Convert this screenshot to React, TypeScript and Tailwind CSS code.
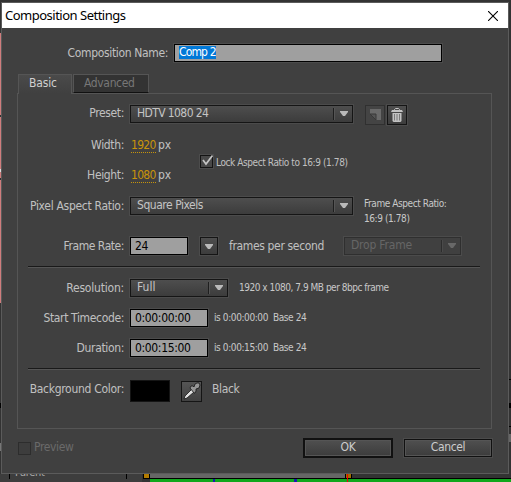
import React from "react";

function Arrow({ dim = false }: { dim?: boolean }) {
  return (
    <svg width="8" height="6" viewBox="0 0 8 6" className="shrink-0">
      <path d="M0 0H8V1L5 5H3L0 1Z" fill={dim ? "#686868" : "#bababa"} />
    </svg>
  );
}

function Label({ children, className = "" }: { children: string; className?: string }) {
  return <div className={`mr-[6px] flex w-[106px] shrink-0 justify-end whitespace-pre text-[#c0c0c0] ${className}`}>{children}</div>;
}

function Select({ children, className, text = "", dim = false }: { children: string; className: string; text?: string; dim?: boolean }) {
  return (
    <div className={`flex h-[18px] shrink-0 items-center border pl-[6px] pr-1 shadow-[0_0_0_1px_#4b4b4b] ${dim ? "border-[#2f2f2f] bg-[#404040] text-[#666]" : "border-[#151515] bg-linear-to-b from-[#4e4e4e] to-[#3c3c3c] text-[#c4c4c4]"} ${className}`}>
      <span className={`relative -top-px flex-1 whitespace-nowrap ${text}`}>{children}</span>
      <span className={`mr-[5px] h-[12px] w-[2px] border-l ${dim ? "border-[#2d2d2d] bg-[#4a4a4a]" : "border-[#1e1e1e] bg-[#555]"}`} />
      <Arrow dim={dim} />
    </div>
  );
}

function Field({ children, className }: { children: React.ReactNode; className: string }) {
  return <div className={`flex h-[18px] shrink-0 items-center whitespace-nowrap border border-black bg-[#9f9f9f] pl-1 text-black shadow-[0_0_0_1px_#4c4c4c] ${className}`}>{children}</div>;
}

function Rule() {
  return <div className="ml-[10px] h-[2px] w-[452px] border-t border-[#191919] bg-[#555]" />;
}

function Check({ checked = false }: { checked?: boolean }) {
  return (
    <div className={`h-[13px] w-[13px] shrink-0 border ${checked ? "border-[#141414] bg-[#484848] shadow-[0_0_0_1px_#4c4c4c]" : "border-[#2d2d2d] bg-[#3d3d3d]"}`}>
      {checked && (
        <svg width="13" height="13" viewBox="0 0 13 13" className="-mt-[2px] overflow-visible">
          <path d="M2 6L5 10 11.5 1.5" fill="none" stroke="#c4c4c4" strokeWidth="1.7" />
        </svg>
      )}
    </div>
  );
}

export default function App() {
  return (
    <div className="relative h-[482px] w-[511px] overflow-hidden bg-[#333] font-['DejaVu_Sans_Condensed','DejaVu_Sans',sans-serif] text-[12px] leading-[14px] tracking-[-0.35px] [font-stretch:condensed]">
      <Backdrop />
      <main className="absolute left-px top-[2px] flex h-[472px] w-[508px] flex-col border border-[#5b5b5b] bg-[#404040]">
        <header className="flex h-[25px] shrink-0 items-center justify-between bg-white pl-[3px] pr-[10px] text-black">
          <h1 className="relative -top-px font-['Noto_Sans',sans-serif] text-[13px] tracking-[-0.5px]">Composition Settings</h1>
          <svg width="10" height="10" viewBox="0 0 10 10"><path d="M0 0L10 10M10 0L0 10" stroke="#000" strokeWidth="1.1" /></svg>
        </header>
        <div className="mt-4 flex h-[18px] shrink-0 items-center">
          <div className="mr-[6px] flex w-[166px] justify-end text-[#c0c0c0]">Composition Name:</div>
          <Field className="w-[268px]"><span className="-mt-[1px] h-[13px] w-[37px] bg-[#0078d7] leading-[13px] tracking-[-0.85px] text-white">Comp 2</span></Field>
        </div>
        <nav className="mt-3 ml-4 flex h-[19px] shrink-0 items-start">
          <div className="z-10 h-5 w-[54px] border border-b-0 border-[#555] bg-linear-to-b from-[#4a4a4a] to-[#404040] pl-[10px] pt-px tracking-[-0.15px] text-[#d0d0d0]">Basic</div>
          <div className="ml-px h-[19px] w-[76px] border border-b-[#111] border-[#555] bg-[#333] pl-[10px] pt-px text-[#777]">Advanced</div>
        </nav>
        <section className="ml-[15px] h-[336px] w-[475px] shrink-0 border border-[#555] pt-[11px]">
          <div className="flex h-5 items-start">
            <Label className="pt-[1px]">Preset:</Label>
            <Select className="w-[223px]" text="tracking-[-0.6px]">HDTV 1080 24</Select>
            <div className="ml-3 flex h-5 w-5 items-center justify-center border border-[#303030] bg-[#444]">
              <svg width="11" height="11" className="-mt-px"><path d="M0 0H11V11H6V5H0Z" fill="#6a6a6a" /><path d="M0 5H6V11L0 5Z" fill="#555" stroke="#383838" /></svg>
            </div>
            <div className="ml-[2px] flex h-5 w-5 items-center justify-center border border-[#151515] bg-linear-to-b from-[#4e4e4e] to-[#3d3d3d] shadow-[0_0_0_1px_#4b4b4b]">
              <svg width="12" height="14" viewBox="0 0 12 14" className="-mt-px"><path d="M3.5 2V1.5L4.5 .5H7.5L8.5 1.5V2" fill="none" stroke="#c6c6c6" /><path d="M1 2H11L12 4H0ZM1.5 5H10.5V13L9.5 14H2.5L1.5 13Z" fill="#c2c2c2" /><path d="M3.5 6V12.5M6 6V12.5M8.5 6V12.5" stroke="#666" strokeWidth=".8" /></svg>
            </div>
          </div>
          <div className="mt-[13px] flex h-[45px] text-[#c0c0c0]">
            <div className="flex w-[182px] flex-col justify-between">
              {[["Width:", "1920"], ["Height:", "1080"]].map(([a, b]) => (
                <div key={a} className="flex h-[15px]"><Label>{a}</Label><span className="ml-px h-[15px] w-[25px] border-b border-dotted border-[#c8940b] tracking-[-0.7px] text-[#c8940b]">{b}</span><span className="ml-[2px] tracking-[-0.1px]">px</span></div>
              ))}
            </div>
            <div className="flex h-[47px] items-center gap-[3px] text-[10px]"><Check checked /><span className="relative top-px tracking-[-0.41px]">Lock Aspect Ratio to 16:9 (1.78)</span></div>
          </div>
          <div className="mt-[14px] flex h-[30px] items-start">
            <Label className="pt-[2px] tracking-[-0.3px]">Pixel Aspect Ratio:</Label>
            <Select className="w-[223px]" text="tracking-[-0.46px]">Square Pixels</Select>
            <div className="-mt-px ml-[11px] text-[10px] leading-[15px] tracking-[-0.42px] text-[#c8c8c8]">Frame Aspect Ratio:<br />16:9 (1.78)</div>
          </div>
          <div className="mt-[10px] flex h-[18px] items-center">
            <Label className="tracking-[-0.45px]">Frame Rate:</Label>
            <Field className="w-[58px] leading-[16px]"><span className="-mt-px">24</span></Field>
            <div className="ml-3 flex h-[18px] w-[18px] items-center justify-center border border-[#151515] bg-linear-to-b from-[#4e4e4e] to-[#3c3c3c] pt-px shadow-[0_0_0_1px_#4b4b4b]"><Arrow /></div>
            <span className="ml-[11px] w-[115px] text-[#c0c0c0]">frames per second</span>
            <Select dim className="w-[117px]" text="tracking-[-0.2px]">Drop Frame</Select>
          </div>
          <div className="mt-[11px]"><Rule /></div>
          <div className="mt-[11px] flex h-[18px] items-center">
            <Label className="tracking-[-0.2px]">Resolution:</Label><Select className="w-[98px]" text="tracking-normal">Full</Select>
            <span className="ml-[11px] text-[10px] tracking-[-0.48px] text-[#c8c8c8]">1920 x 1080, 7.9 MB per 8bpc frame</span>
          </div>
          {[["Start Timecode:", "0:00:00:00"], ["Duration:", "0:00:15:00"]].map(([a, b]) => (
            <div key={a} className="mt-3 flex h-[18px] items-center">
              <Label>{a}</Label><Field className="w-[78px]"><span className="-mt-px">{b}</span></Field>
              <span className="ml-[6px] whitespace-pre text-[10px] tracking-[-0.4px] text-[#c8c8c8]">is {b}  Base 24</span>
            </div>
          ))}
          <div className="mt-[11px]"><Rule /></div>
          <div className="mt-[10px] flex h-[22px] items-center">
            <Label className="-mt-[5px] tracking-[-0.3px]">Background Color:</Label>
            <div className="h-[22px] w-10 border border-[#151515] bg-black" />
            <div className="ml-[11px] h-[21px] w-[21px] border border-[#151515] bg-linear-to-b from-[#555] to-[#414141]">
              <svg width="19" height="19" viewBox="0 0 19 19"><path d="M2 17L3 14 9.5 7.5 12 10 5 16Z" fill="#e0e0e0" stroke="#171717" strokeWidth=".8" /><path d="M8 6L9 4L11 4L12 5L13 2L15 1H17L18 3L17 6L14 7V9L13 11H12Z" fill="#969696" stroke="#171717" strokeWidth=".8" /></svg>
            </div>
            <span className="-mt-[5px] ml-[10px] text-[#c0c0c0]">Black</span>
          </div>
        </section>
        <footer className="mt-[9px] flex h-5 items-center pl-4 text-[#6a6a6a]">
          <Check /><span className="relative -top-px ml-[3px] w-[269px]">Preview</span>
          <button className="h-5 w-[90px] border-2 border-[#111] bg-linear-to-b from-[#505050] to-[#3c3c3c] leading-[14px] text-[#ccc] shadow-[inset_0_0_0_1px_#555]"><span className="relative -top-px">OK</span></button>
          <button className="ml-[11px] h-[18px] w-[88px] border border-[#111] bg-linear-to-b from-[#505050] to-[#3c3c3c] leading-[14px] text-[#ccc] shadow-[0_0_0_1px_#4b4b4b,inset_0_0_0_1px_#555]"><span className="relative -top-px">Cancel</span></button>
        </footer>
      </main>
    </div>
  );
}

function Backdrop() {
  return (
    <div className="absolute inset-0">
      <div className="absolute left-0 top-[33px] h-[270px] w-px bg-[#d07d7d]" />
      <div className="absolute left-0 top-[115px] h-[2px] w-px bg-[#333]" />
      <div className="absolute left-0 top-[169px] h-[3px] w-px bg-[#ddd]" />
      <div className="absolute left-0 top-[178px] h-[2px] w-px bg-[#333]" />
      <div className="absolute left-0 top-[403px] h-[5px] w-px bg-black" />
      <div className="absolute left-0 top-[443px] h-[8px] w-px bg-[#777]" />
      <div className="absolute right-0 top-[379px] h-px w-[2px] bg-black" />
      <div className="absolute right-0 top-[403px] h-[5px] w-[2px] bg-black" />
      <div className="absolute right-0 top-[426px] h-px w-[2px] bg-black" />
      <div className="absolute right-0 top-[434px] h-[8px] w-[2px] bg-[#666]" />
      <div className="absolute left-0 top-[474px] h-[8px] w-[142px] bg-[#3d3d3d]" />
      <div className="absolute left-[9px] top-[474px] h-[5px] w-px bg-black" />
      <div className="absolute left-[126px] top-[474px] h-[5px] w-px bg-black" />
      <div className="absolute left-[15px] top-[466px] text-[11px] text-[#aaa]">Parent</div>
      <div className="absolute left-[150px] top-[474px] h-1 w-[195px] bg-[#666]" />
      <div className="absolute left-[143px] top-[474px] h-1 w-[7px] border-x border-black bg-[#b37b00]" />
      <div className="absolute left-[345px] top-[474px] h-1 w-[7px] border-x border-black bg-[#a06d00]" />
      <div className="absolute left-[143px] top-[478px] h-px w-[368px] bg-black" />
      <div className="absolute left-[150px] top-[479px] h-[3px] w-[361px] bg-[#10a81d]" />
      <div className="absolute left-[213px] top-[479px] h-[3px] w-[2px] bg-[#1a1ab0]" />
      <div className="absolute left-[294px] top-[479px] h-[3px] w-[3px] bg-[#1a1ab0]" />
      <div className="absolute left-[347px] top-[474px] h-[8px] w-px bg-[#e00]" />
    </div>
  );
}
